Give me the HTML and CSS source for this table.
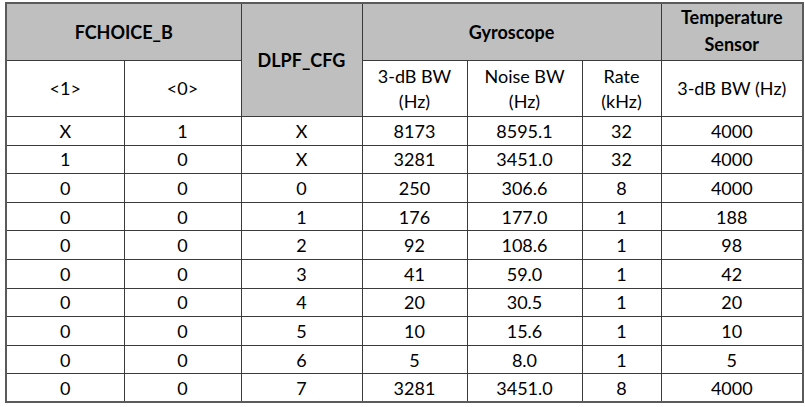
FILE: index.html
```html
<!DOCTYPE html>
<html>
<head>
<meta charset="utf-8">
<link rel="stylesheet" href="styles.css">
</head>
<body>
<table class="spec">
  <colgroup>
    <col class="c1"><col class="c2"><col class="c3"><col class="c4"><col class="c5"><col class="c6"><col class="c7">
  </colgroup>
  <thead>
    <tr class="h1">
      <th colspan="2" class="gray">FCHOICE_B</th>
      <th rowspan="2" class="gray dlpf">DLPF_CFG</th>
      <th colspan="3" class="gray">Gyroscope</th>
      <th class="gray temp">Temperature<br>Sensor</th>
    </tr>
    <tr class="h2">
      <td>&lt;1&gt;</td>
      <td>&lt;0&gt;</td>
      <td>3-dB BW<br>(Hz)</td>
      <td>Noise BW<br>(Hz)</td>
      <td>Rate<br>(kHz)</td>
      <td>3-dB BW (Hz)</td>
    </tr>
  </thead>
  <tbody>
    <tr><td>X</td><td>1</td><td>X</td><td>8173</td><td>8595.1</td><td>32</td><td>4000</td></tr>
    <tr><td>1</td><td>0</td><td>X</td><td>3281</td><td>3451.0</td><td>32</td><td>4000</td></tr>
    <tr><td>0</td><td>0</td><td>0</td><td>250</td><td>306.6</td><td>8</td><td>4000</td></tr>
    <tr><td>0</td><td>0</td><td>1</td><td>176</td><td>177.0</td><td>1</td><td>188</td></tr>
    <tr><td>0</td><td>0</td><td>2</td><td>92</td><td>108.6</td><td>1</td><td>98</td></tr>
    <tr><td>0</td><td>0</td><td>3</td><td>41</td><td>59.0</td><td>1</td><td>42</td></tr>
    <tr><td>0</td><td>0</td><td>4</td><td>20</td><td>30.5</td><td>1</td><td>20</td></tr>
    <tr><td>0</td><td>0</td><td>5</td><td>10</td><td>15.6</td><td>1</td><td>10</td></tr>
    <tr><td>0</td><td>0</td><td>6</td><td>5</td><td>8.0</td><td>1</td><td>5</td></tr>
    <tr><td>0</td><td>0</td><td>7</td><td>3281</td><td>3451.0</td><td>8</td><td>4000</td></tr>
  </tbody>
</table>
</body>
</html>
```

FILE: styles.css
```css
html, body {
  margin: 0;
  padding: 0;
  background: #ffffff;
}
body {
  padding: 2px 0 0 5px;
  font-family: Lato, "Open Sans", "Liberation Sans", sans-serif;
  color: #000;
}
.spec {
  border-collapse: collapse;
  table-layout: fixed;
  width: 798px;
  border: 2px solid #5a5a5a;
}
.c1 { width: 118px; }
.c2 { width: 117px; }
.c3 { width: 121px; }
.c4 { width: 105px; }
.c5 { width: 115px; }
.c6 { width: 79px; }
.c7 { width: 142px; }
.spec th, .spec td {
  border: 1px solid #3a3a3a;
  text-align: center;
  vertical-align: middle;
  padding: 0;
  font-size: 18px;
  line-height: 24px;
}
.spec th {
  font-weight: 700;
}
.gray {
  background: #bfbfbf;
}
.dlpf {
  padding-bottom: 8px;
}
.spec .temp {
  line-height: 27px;
  padding-bottom: 2px;
}
.h1 { height: 57px; }
.h2 { height: 56px; }
.h2 td { line-height: 25px; }
tbody tr { height: 28.6px; }
```
